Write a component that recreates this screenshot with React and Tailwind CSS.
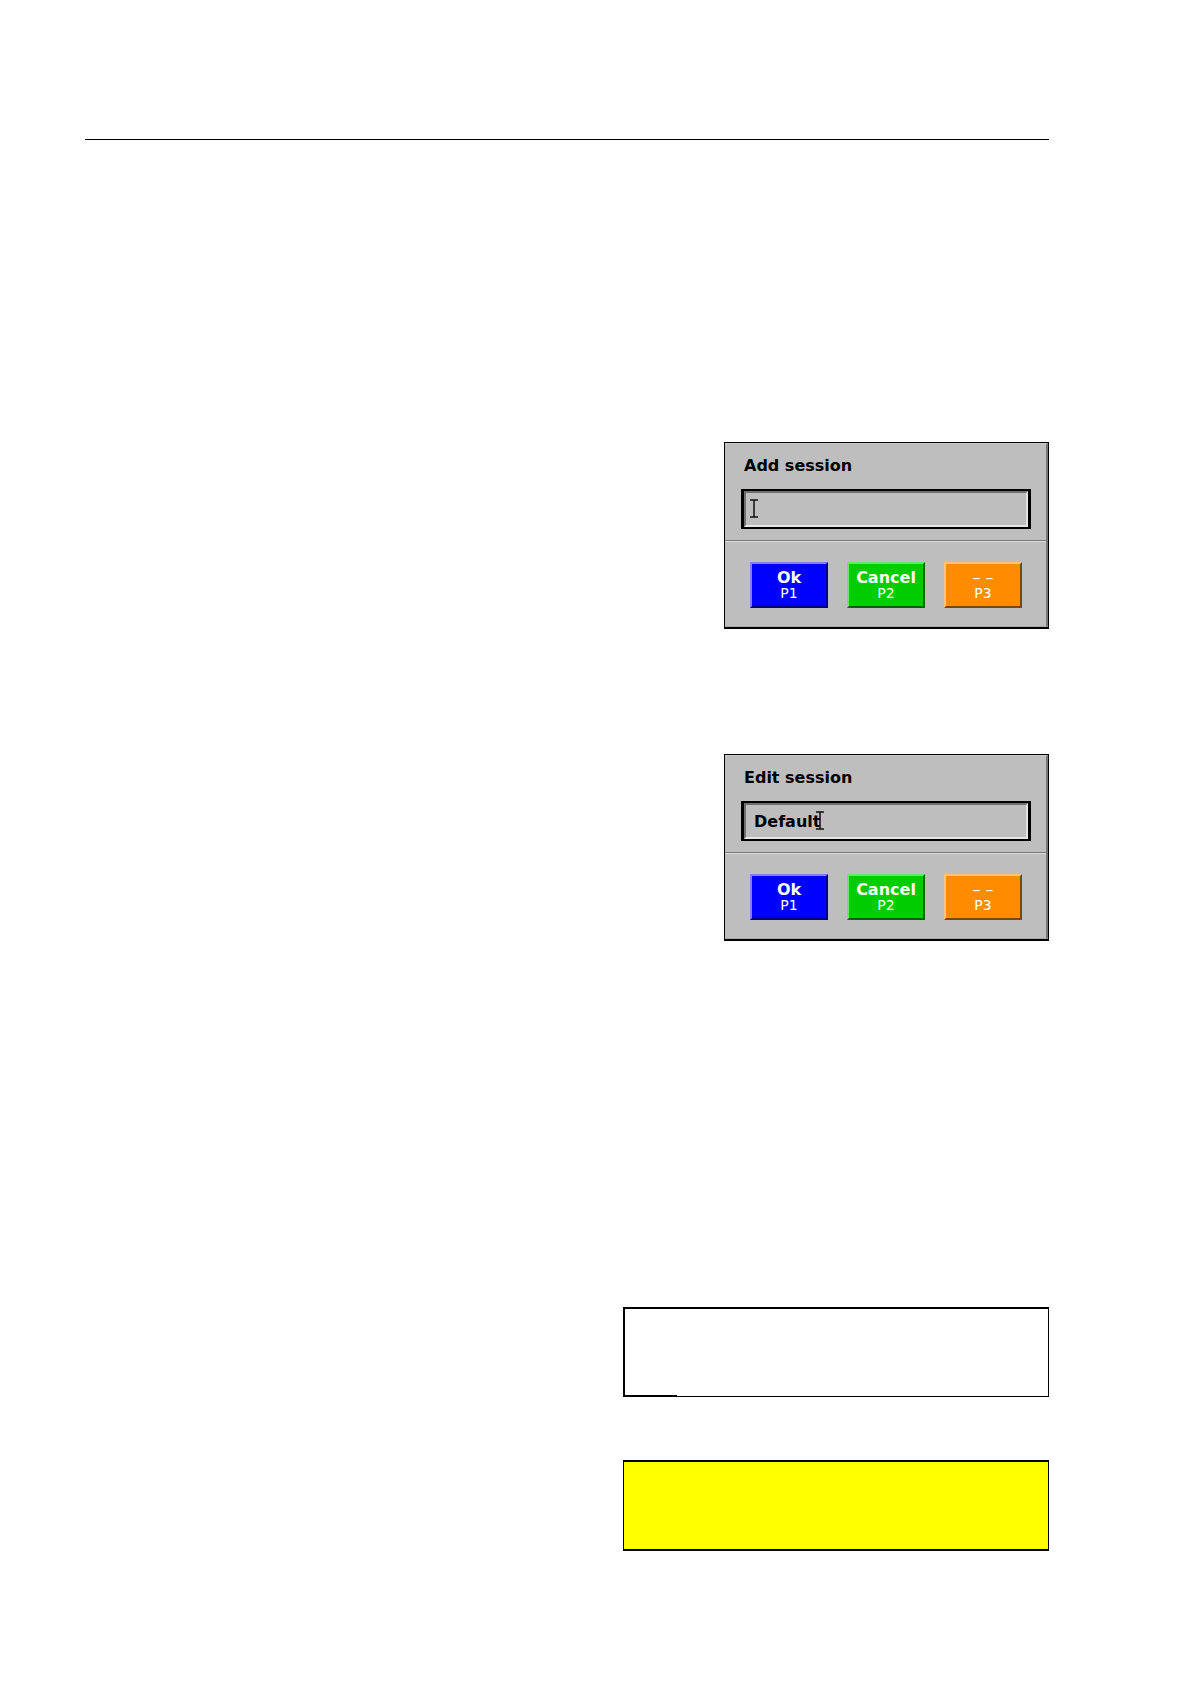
const keys = [
  {
    label: "Ok",
    hint: "P1",
    color:
      "bg-[#0000ff] border-t-[#8080ff] border-l-[#8080ff] border-r-[#000080] border-b-[#000080]",
    weight: "font-bold",
  },
  {
    label: "Cancel",
    hint: "P2",
    color:
      "bg-[#00cd00] border-t-[#66e866] border-l-[#66e866] border-r-[#006400] border-b-[#006400]",
    weight: "font-bold",
  },
  {
    label: "– –",
    hint: "P3",
    color:
      "bg-[#ff8c00] border-t-[#ffc580] border-l-[#ffc580] border-r-[#804600] border-b-[#804600]",
    weight: "font-normal",
  },
];

const TextCursor = ({ className }) => (
  <svg
    viewBox="0 0 8 19"
    className={`absolute top-2 h-[19px] w-2 ${className}`}
    aria-hidden="true"
  >
    <path
      d="M0 1H8M0 18H8M4 1V18"
      stroke="#111"
      strokeWidth="1.5"
      fill="none"
    />
  </svg>
);

const SessionDialog = ({ id, title, value, cursor }) => (
  <form
    className="w-[325px] border border-b-2 border-black bg-[#bebebe]"
    onSubmit={(e) => e.preventDefault()}
  >
    <div className="border-t border-r-2 border-b border-t-[#c8c8c8] border-r-[#777] border-b-[#aaa]">
      <div className="h-24 px-4 pt-3">
        <label
          htmlFor={id}
          className="block h-[33px] pl-[3px] text-base leading-5 font-bold"
        >
          {title}
        </label>
        <div className="relative -mr-px h-10 border-x-3 border-y-2 border-black">
          <input
            id={id}
            type="text"
            defaultValue={value}
            className="block h-full w-full border-2 border-t-[#707070] border-r-[#e4e4e4] border-b-[#e4e4e4] border-l-[#707070] bg-[#bebebe] px-2 text-base leading-5 font-bold outline-none"
          />
          <TextCursor className={cursor} />
        </div>
      </div>
      <hr className="h-0.5 border-t border-b border-t-[#777] border-b-[#dcdcdc]" />
      <div className="flex h-[84px] gap-[19px] pt-5 pl-[25px]">
        {keys.map((key) => (
          <button
            key={key.hint}
            type="button"
            className={`flex h-[46px] w-[78px] flex-col items-center border-2 pt-1.5 text-white ${key.color}`}
          >
            <span className={`text-base leading-4 ${key.weight}`}>
              {key.label}
            </span>
            <span className="text-sm leading-[14px]">{key.hint}</span>
          </button>
        ))}
      </div>
    </div>
  </form>
);

export default function App() {
  return (
    <main className="min-h-screen bg-white pt-[139px] pr-[141px] pb-[133px] pl-[85px] font-['DejaVu_Sans',sans-serif] text-black">
      <hr className="border-t border-black" />
      <div className="mt-[302px] flex flex-col items-end">
        <SessionDialog id="add-session" title="Add session" value="" cursor="left-1.5" />
        <div className="mt-[125px]">
          <SessionDialog
            id="edit-session"
            title="Edit session"
            value="Default"
            cursor="left-[72px]"
          />
        </div>
        <div className="mt-[366px] flex h-[90px] w-[426px] items-end border border-t-2 border-l-2 border-black">
          <div className="h-px w-[52px] bg-black" />
        </div>
        <div className="mt-[63px] h-[91px] w-[426px] border-x border-y-2 border-black bg-[#ffff00]" />
      </div>
    </main>
  );
}
